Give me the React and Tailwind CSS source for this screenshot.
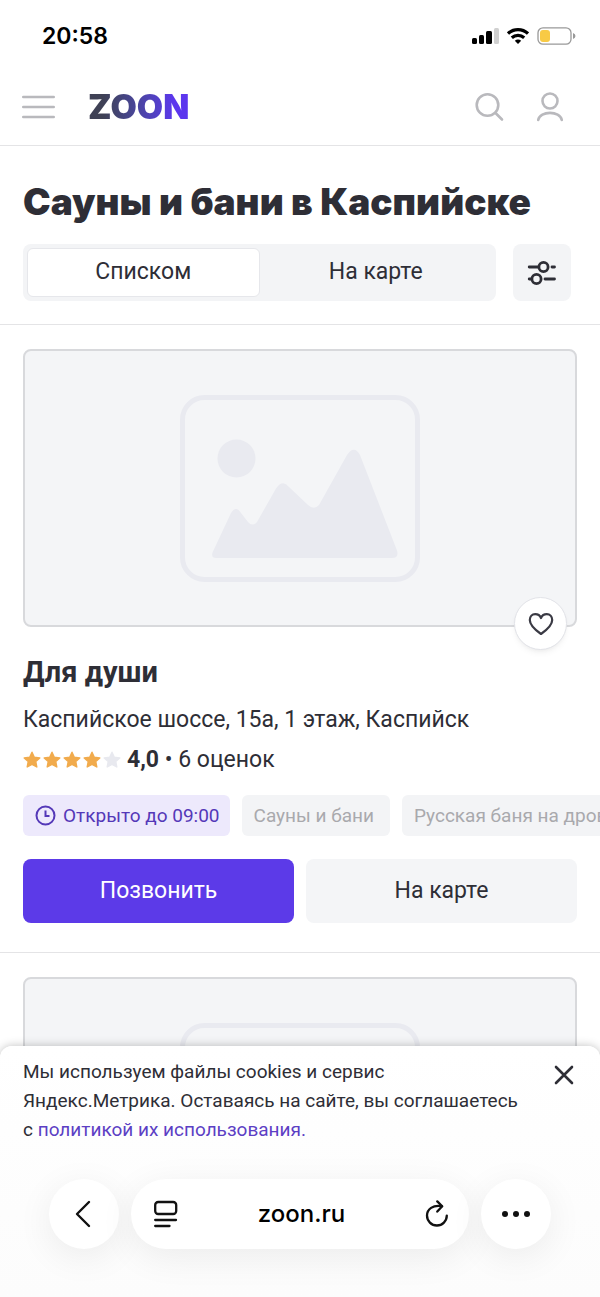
import clsx from "clsx";

const TAGS = ["Сауны и бани", "Русская баня на дровах"];

function StatusBar() {
  return (
    <div className="flex h-[72px] shrink-0 items-center justify-between pr-6 pl-[42px]">
      <span className="font-[Inter] text-[23px] font-semibold text-black">20:58</span>
      <div className="flex items-center gap-2">
        <svg width="27" height="18" viewBox="0 0 27 18">
          <rect x="0" y="11" width="5" height="6" rx="1.5" />
          <rect x="7" y="8" width="5" height="9" rx="1.5" />
          <rect x="14" y="4" width="6" height="13" rx="1.5" />
          <rect x="22" y="1" width="5" height="16" rx="1.5" fill="#d0d0d0" />
        </svg>
        <svg width="22" height="18" viewBox="0 0 22 18" fill="none" stroke="#000" strokeWidth="3.2">
          <path d="M1 6.6 C6.5 1.2 15.5 1.2 21 6.6" />
          <path d="M4.8 10.8 C8.3 7.6 13.7 7.6 17.2 10.8" />
          <path d="M7.8 13.8 Q11 11.2 14.2 13.8 L11 17 Z" fill="#000" stroke="none" />
        </svg>
        <svg width="39" height="18" viewBox="0 0 39 18">
          <rect x="1" y="0.8" width="33" height="16.4" rx="5" fill="none" stroke="#999" strokeWidth="1.3" />
          <rect x="3" y="3" width="10" height="12" rx="3" fill="#f8ca45" />
          <path d="M36 6 Q38.5 7 38.5 9 T36 12 Z" fill="#999" />
        </svg>
      </div>
    </div>
  );
}

function Header() {
  return (
    <header className="flex h-[74px] shrink-0 items-center border-b border-[#e4e4e6] pr-9 pb-[3px] pl-[22px]">
      <button aria-label="Меню" className="text-[#b9b9bd]">
        <svg width="33" height="26" viewBox="0 0 33 26" stroke="currentColor" strokeWidth="2.4" strokeLinecap="round">
          <path d="M1.2 3 H31.8 M1.2 13 H31.8 M1.2 23 H31.8" />
        </svg>
      </button>
      <a
        href="#"
        className="ml-[33px] bg-linear-to-r from-[#3f4155] from-15% to-[#5c36ee] to-85% bg-clip-text font-[Inter] text-[34px] leading-9 font-black text-transparent"
      >
        ZOON
      </a>
      <div className="ml-auto flex items-center gap-8 text-[#b9b9bd]">
        <button aria-label="Поиск">
          <svg width="30" height="30" viewBox="0 0 30 30" fill="none" stroke="currentColor" strokeWidth="2.6" strokeLinecap="round">
            <circle cx="13.5" cy="13" r="10.8" />
            <path d="M21.5 21 L28 27.5" />
          </svg>
        </button>
        <button aria-label="Профиль">
          <svg width="28" height="30" viewBox="0 0 28 30" fill="none" stroke="currentColor" strokeWidth="2.6" strokeLinecap="round">
            <circle cx="14" cy="9" r="7.5" />
            <path d="M2.2 28 C4 18.5 24 18.5 25.8 28" />
          </svg>
        </button>
      </div>
    </header>
  );
}

function Placeholder() {
  return (
    <div className="flex h-[278px] items-center justify-center rounded-lg border-2 border-[#d8d9dc] bg-[#f4f5f7]">
      <svg width="240" height="187" viewBox="0 0 240 187" fill="#e9eaf0">
        <rect x="2.5" y="2.5" width="235" height="182" rx="22" fill="none" stroke="#e9eaf0" strokeWidth="5" />
        <circle cx="56.5" cy="63.5" r="19" />
        <path d="M36 163 Q31 163 32.5 157.5 L51 118 Q56 110 61 118 L68 127 Q72.5 132 77 127 L96 93.5 Q102.5 84 109 92 L128 110 Q134 115.5 139 110 L167 60 Q174 49.5 180 60 L217 155.5 Q219 163 212 163 Z" />
      </svg>
    </div>
  );
}

function Stars({ value }) {
  return (
    <div className="flex gap-[2px]">
      {[1, 2, 3, 4, 5].map((n) => (
        <svg
          key={n}
          width="18"
          height="18"
          viewBox="0 0 18 18"
          fill="currentColor"
          className={clsx(n <= value ? "text-[#f1ab4d]" : "text-[#e8e9ef]")}
        >
          <path
            d="M9 1.2 L11.3 6.2 L16.8 6.9 L12.8 10.6 L13.8 16 L9 13.4 L4.2 16 L5.2 10.6 L1.2 6.9 L6.7 6.2 Z"
            stroke="currentColor"
            strokeWidth="1.4"
            strokeLinejoin="round"
          />
        </svg>
      ))}
    </div>
  );
}

function PlaceCard() {
  return (
    <article className="border-b border-[#e4e4e6] px-[23px] pt-6 pb-[29px]">
      <div className="relative">
        <Placeholder />
        <button
          aria-label="В избранное"
          className="absolute right-[10px] -bottom-[23px] flex size-[53px] items-center justify-center rounded-full border border-[#e2e3e8] bg-white shadow-md shadow-black/5"
        >
          <svg width="26" height="24" viewBox="0 0 26 24" fill="none" stroke="#3a3a44" strokeWidth="2.2" strokeLinejoin="round">
            <path d="M13 22 C8 18.5 1.8 13.2 1.8 8 C1.8 4.4 4.2 2.2 7.2 2.2 C9.8 2.2 12 3.6 13 6 C14 3.6 16.2 2.2 18.8 2.2 C21.8 2.2 24.2 4.4 24.2 8 C24.2 13.2 18 18.5 13 22 Z" />
          </svg>
        </button>
      </div>

      <h2 className="mt-[25px] text-[29px] leading-10 font-bold">Для души</h2>
      <p className="mt-3 text-[23px] leading-8">Каспийское шоссе, 15а, 1 этаж, Каспийск</p>

      {/* rating */}
      <div className="mt-2 flex items-center gap-[6px] text-[23px] leading-8">
        <Stars value={4} />
        <p>
          <b>4,0</b> • 6 оценок
        </p>
      </div>

      {/* tags run off the right edge */}
      <div className="mt-[19px] -mr-[23px] flex gap-3 overflow-hidden text-[19px] leading-[41px] whitespace-nowrap">
        <span className="flex shrink-0 items-center gap-[7px] rounded-md bg-[#ede9fc] pr-[10px] pl-3 text-[#5438b8]">
          <svg width="21" height="21" viewBox="0 0 21 21" fill="none" stroke="currentColor" strokeWidth="2">
            <circle cx="10.5" cy="10.5" r="9" />
            <path d="M10.5 5.5 V11 H14.5" />
          </svg>
          Открыто до 09:00
        </span>
        {TAGS.map((tag) => (
          <span key={tag} className="shrink-0 rounded-md bg-[#f3f4f6] pr-4 pl-3 text-[#a9a9ad]">
            {tag}
          </span>
        ))}
      </div>

      <div className="mt-[23px] grid grid-cols-2 gap-3 text-[23px]">
        <button className="h-16 rounded-lg bg-[#5c3ae8] text-white">Позвонить</button>
        <button className="h-16 rounded-lg bg-[#f4f5f7]">На карте</button>
      </div>
    </article>
  );
}

function CookieNotice() {
  return (
    <div className="flex items-start justify-between pr-[26px] pl-[23px]">
      <p className="max-w-[500px] text-[19px] leading-[29px]">
        Мы используем файлы cookies и сервис Яндекс.Метрика. Оставаясь на сайте, вы соглашаетесь
        с{" "}
        <a href="#" className="text-[#5c3fc4]">
          политикой их использования.
        </a>
      </p>
      <button aria-label="Закрыть" className="mt-2">
        <svg width="20" height="20" viewBox="0 0 20 20" stroke="#2e2e36" strokeWidth="2.6" strokeLinecap="round">
          <path d="M2 2 L18 18 M18 2 L2 18" />
        </svg>
      </button>
    </div>
  );
}

function BrowserBar() {
  return (
    <nav className="mx-[49px] mt-[35px] flex h-[70px] gap-3 text-black">
      <button aria-label="Назад" className="flex w-[70px] items-center justify-center rounded-full bg-white shadow-[0_8px_36px_rgba(0,0,0,0.07)]">
        <svg width="18" height="28" viewBox="0 0 18 28" fill="none" stroke="#111" strokeWidth="2.4" strokeLinecap="round" strokeLinejoin="round">
          <path d="M14 2 L2 14 L14 26" />
        </svg>
      </button>
      <div className="flex flex-1 items-center justify-between rounded-full bg-white pr-5 pl-[23px] shadow-[0_8px_36px_rgba(0,0,0,0.07)]">
        <button aria-label="Вид страницы">
          <svg width="24" height="28" viewBox="0 0 24 28" fill="none" stroke="#111" strokeWidth="2.3" strokeLinecap="round">
            <rect x="1.2" y="2" width="21" height="12" rx="3" />
            <path d="M1.2 20 H22 M1.2 26 H15.5" />
          </svg>
        </button>
        <span className="font-[Inter] text-2xl font-medium">zoon.ru</span>
        <button aria-label="Обновить">
          <svg width="24" height="28" viewBox="0 0 24 28" fill="none" stroke="#111" strokeWidth="2.3" strokeLinecap="round" strokeLinejoin="round">
            <path d="M16.8 6.2 C8 4.6 2 9.2 2 15.6 A9.9 9.9 0 0 0 21.8 15.6" />
            <path d="M12.3 1.4 L17.2 6.2 L12.3 11.6" />
          </svg>
        </button>
      </div>
      <button aria-label="Ещё" className="flex w-[70px] items-center justify-center rounded-full bg-white shadow-[0_8px_36px_rgba(0,0,0,0.07)]">
        <svg width="30" height="8" viewBox="0 0 30 8" fill="#111">
          <circle cx="4" cy="4" r="3" />
          <circle cx="15" cy="4" r="3" />
          <circle cx="26" cy="4" r="3" />
        </svg>
      </button>
    </nav>
  );
}

export default function App() {
  return (
    <div className="flex h-screen flex-col overflow-hidden bg-white font-[Roboto,sans-serif] text-[#2e2e36]">
      <StatusBar />
      <Header />

      <main className="min-h-0 flex-1 overflow-y-auto [scrollbar-width:none]">
        <section className="border-b border-[#e4e4e6] px-[23px] pt-9 pb-[23px]">
          <h1 className="font-[Inter] text-[37px] leading-10 font-black">Сауны и бани в Каспийске</h1>
          <div className="mt-[22px] flex gap-[17px] pr-[6px] text-[23px]">
            <div className="grid h-[57px] flex-1 grid-cols-2 rounded-lg bg-[#f3f4f6] p-1">
              <button className="rounded-md border border-[#e6e7eb] bg-white">Списком</button>
              <button>На карте</button>
            </div>
            <button aria-label="Фильтры" className="flex w-[58px] items-center justify-center rounded-lg bg-[#f3f4f6]">
              <svg width="30" height="26" viewBox="0 0 30 26" fill="none" stroke="#2e2e36" strokeWidth="2.8" strokeLinecap="round">
                <circle cx="16.5" cy="7" r="4.6" />
                <path d="M2.2 7 H11 M25 7 H27.5" />
                <circle cx="9.5" cy="19" r="4.6" />
                <path d="M2.2 19 H4 M18 19 H27.5" />
              </svg>
            </button>
          </div>
        </section>

        <PlaceCard />
        <div className="px-[23px] py-6">
          <Placeholder />
        </div>
      </main>

      {/* bottom sheet */}
      <footer className="relative -mt-3 shrink-0 rounded-t-xl bg-linear-to-b from-white to-[#fcfcfc] pt-[11px] pb-12 shadow-[0_0_10px_rgba(0,0,0,0.25)]">
        <CookieNotice />
        <BrowserBar />
      </footer>
    </div>
  );
}
